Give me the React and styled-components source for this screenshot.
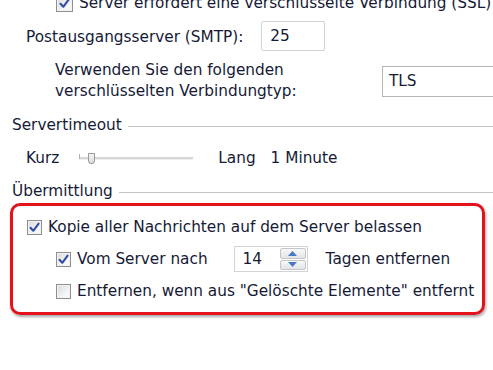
import styled, { createGlobalStyle } from "styled-components";

const GlobalStyle = createGlobalStyle`
    html, body {
        margin: 0;
        padding: 0;
        background: #ffffff;
    }
`;

function CheckIcon() {
    return (
        <svg width="11" height="11" viewBox="0 0 11 11">
            <path
                d="M1.5 5.8 L4.3 8.8 L9.6 1.6"
                fill="none"
                stroke="#2f4aa5"
                strokeWidth="2"
                strokeLinecap="round"
                strokeLinejoin="round"
            />
        </svg>
    );
}

function Checkbox({ checked, size }) {
    return <Box $size={size}>{checked && <CheckIcon />}</Box>;
}

function Spinner() {
    return (
        <SpinButtons>
            <SpinHalf>
                <svg width="9" height="5" viewBox="0 0 9 5">
                    <path d="M0 5 L4.5 0 L9 5 Z" fill="#4a78c8" />
                </svg>
            </SpinHalf>
            <SpinHalf>
                <svg width="9" height="5" viewBox="0 0 9 5">
                    <path d="M0 0 L4.5 5 L9 0 Z" fill="#4a78c8" />
                </svg>
            </SpinHalf>
        </SpinButtons>
    );
}

function App() {
    return (
        <>
            <GlobalStyle />
            <Page>
                <TopRow>
                    <Checkbox checked size={17} />
                    <Label>Server erfordert eine verschlüsselte Verbindung (SSL)</Label>
                </TopRow>

                <SmtpRow>
                    <Label>Postausgangsserver (SMTP):</Label>
                    <TextInput $width={64}>25</TextInput>
                </SmtpRow>

                <EncryptRow>
                    <TwoLine>
                        Verwenden Sie den folgenden
                        <br />
                        verschlüsselten Verbindungtyp:
                    </TwoLine>
                    <SelectBox>TLS</SelectBox>
                </EncryptRow>

                <GroupHeader $top={13}>
                    <Label>Servertimeout</Label>
                    <Rule />
                </GroupHeader>

                <SliderRow>
                    <Label>Kurz</Label>
                    <Track>
                        <TrackStart />
                        <Thumb />
                    </Track>
                    <Label>Lang</Label>
                    <TimeLabel>1 Minute</TimeLabel>
                </SliderRow>

                <GroupHeader $top={11}>
                    <Label>Übermittlung</Label>
                    <Rule />
                </GroupHeader>

                <Highlight>
                    <CheckRow>
                        <Checkbox checked />
                        <Label>Kopie aller Nachrichten auf dem Server belassen</Label>
                    </CheckRow>
                    <CheckRow $indent $height={26}>
                        <Checkbox checked />
                        <Label>Vom Server nach</Label>
                        <NumberField>
                            <NumberValue>14</NumberValue>
                            <Spinner />
                        </NumberField>
                        <Label>Tagen entfernen</Label>
                    </CheckRow>
                    <CheckRow $indent>
                        <Checkbox />
                        <Label>Entfernen, wenn aus "Gelöschte Elemente" entfernt</Label>
                    </CheckRow>
                </Highlight>
            </Page>
        </>
    );
}

export default App;

const Page = styled.div`
    width: 493px;
    height: 370px;
    overflow: hidden;
    background: #ffffff;
    font-family: "DejaVu Sans", Verdana, sans-serif;
    font-size: 15.3px;
    color: #161a36;
    display: flex;
    flex-direction: column;
`;

const Label = styled.span`
    white-space: nowrap;
    line-height: 20px;
`;

const TopRow = styled.div`
    display: flex;
    align-items: center;
    gap: 6px;
    height: 20px;
    margin-top: -7px;
    padding-left: 56px;
`;

const SmtpRow = styled.div`
    display: flex;
    align-items: center;
    gap: 18px;
    height: 30px;
    margin-top: 9px;
    padding-left: 26px;
`;

const TextInput = styled.div`
    box-sizing: border-box;
    width: ${(p) => p.$width}px;
    height: 30px;
    border: 1px solid #d2d3d6;
    border-radius: 2px;
    padding-left: 8px;
    display: flex;
    align-items: center;
    margin-top: -2px;
`;

const EncryptRow = styled.div`
    display: flex;
    align-items: center;
    margin-top: 8px;
    padding-left: 55px;
`;

const TwoLine = styled.div`
    width: 327px;
    flex-shrink: 0;
    line-height: 21px;
    white-space: nowrap;
`;

const SelectBox = styled.div`
    box-sizing: border-box;
    width: 140px;
    height: 31px;
    border: 1px solid #b4b6ba;
    padding-left: 6px;
    display: flex;
    align-items: center;
    flex-shrink: 0;
`;

const GroupHeader = styled.div`
    display: flex;
    align-items: center;
    gap: 6px;
    height: 20px;
    margin-top: ${(p) => p.$top}px;
    padding-left: 12px;
`;

const Rule = styled.div`
    flex: 1;
    height: 1px;
    background: #c4c4c4;
    margin-top: 2px;
`;

const SliderRow = styled.div`
    display: flex;
    align-items: center;
    height: 24px;
    margin-top: 11px;
    padding-left: 26px;
`;

const Track = styled.div`
    position: relative;
    width: 114px;
    height: 2px;
    margin: 0 25px 0 20px;
    background: #d6d6d6;
    border-bottom: 1px solid #eeeeee;
`;

const TrackStart = styled.div`
    position: absolute;
    left: 0;
    top: -3px;
    width: 1px;
    height: 5px;
    background: #b0b0b0;
`;

const Thumb = styled.div`
    position: absolute;
    left: 9px;
    top: -4px;
    width: 5px;
    height: 9px;
    border: 1px solid #9a9a9a;
    border-radius: 0 0 3px 3px;
    background: linear-gradient(#f6f6f6, #dcdcdc);
`;

const TimeLabel = styled.span`
    white-space: nowrap;
    margin-left: 15px;
`;

const Highlight = styled.div`
    box-sizing: border-box;
    width: 475px;
    height: 112px;
    margin: 2px 0 0 10px;
    border: 3px solid #e3121b;
    border-radius: 10px;
    box-shadow: 1px 2px 3px rgba(0, 0, 0, 0.35);
    padding: 10px 0 0 14px;
    display: flex;
    flex-direction: column;
    gap: 8px;
`;

const CheckRow = styled.div`
    display: flex;
    align-items: center;
    gap: 6px;
    height: ${(p) => p.$height || 22}px;
    padding-left: ${(p) => (p.$indent ? 29 : 0)}px;
`;

const Box = styled.span`
    box-sizing: border-box;
    width: ${(p) => p.$size || 15}px;
    height: ${(p) => p.$size || 15}px;
    flex-shrink: 0;
    border: 1px solid #8e8f93;
    background: linear-gradient(135deg, #d9d9dc, #f7f7f8 70%);
    box-shadow: inset 0 0 0 1px #f2f2f2;
    display: flex;
    align-items: center;
    justify-content: center;
`;

const NumberField = styled.div`
    box-sizing: border-box;
    display: flex;
    align-items: center;
    width: 74px;
    height: 26px;
    margin: 0 12px 0 20px;
    border: 1px solid #d2d3d6;
    padding-left: 8px;
`;

const NumberValue = styled.span`
    flex: 1;
`;

const SpinButtons = styled.div`
    display: flex;
    flex-direction: column;
    gap: 1px;
    width: 26px;
    height: 22px;
    margin-right: 1px;
`;

const SpinHalf = styled.div`
    flex: 1;
    display: flex;
    align-items: center;
    justify-content: center;
    border: 1px solid #c3c5c9;
    border-radius: 2px;
    background: linear-gradient(#f8f8f8, #e2e4e8);
`;
